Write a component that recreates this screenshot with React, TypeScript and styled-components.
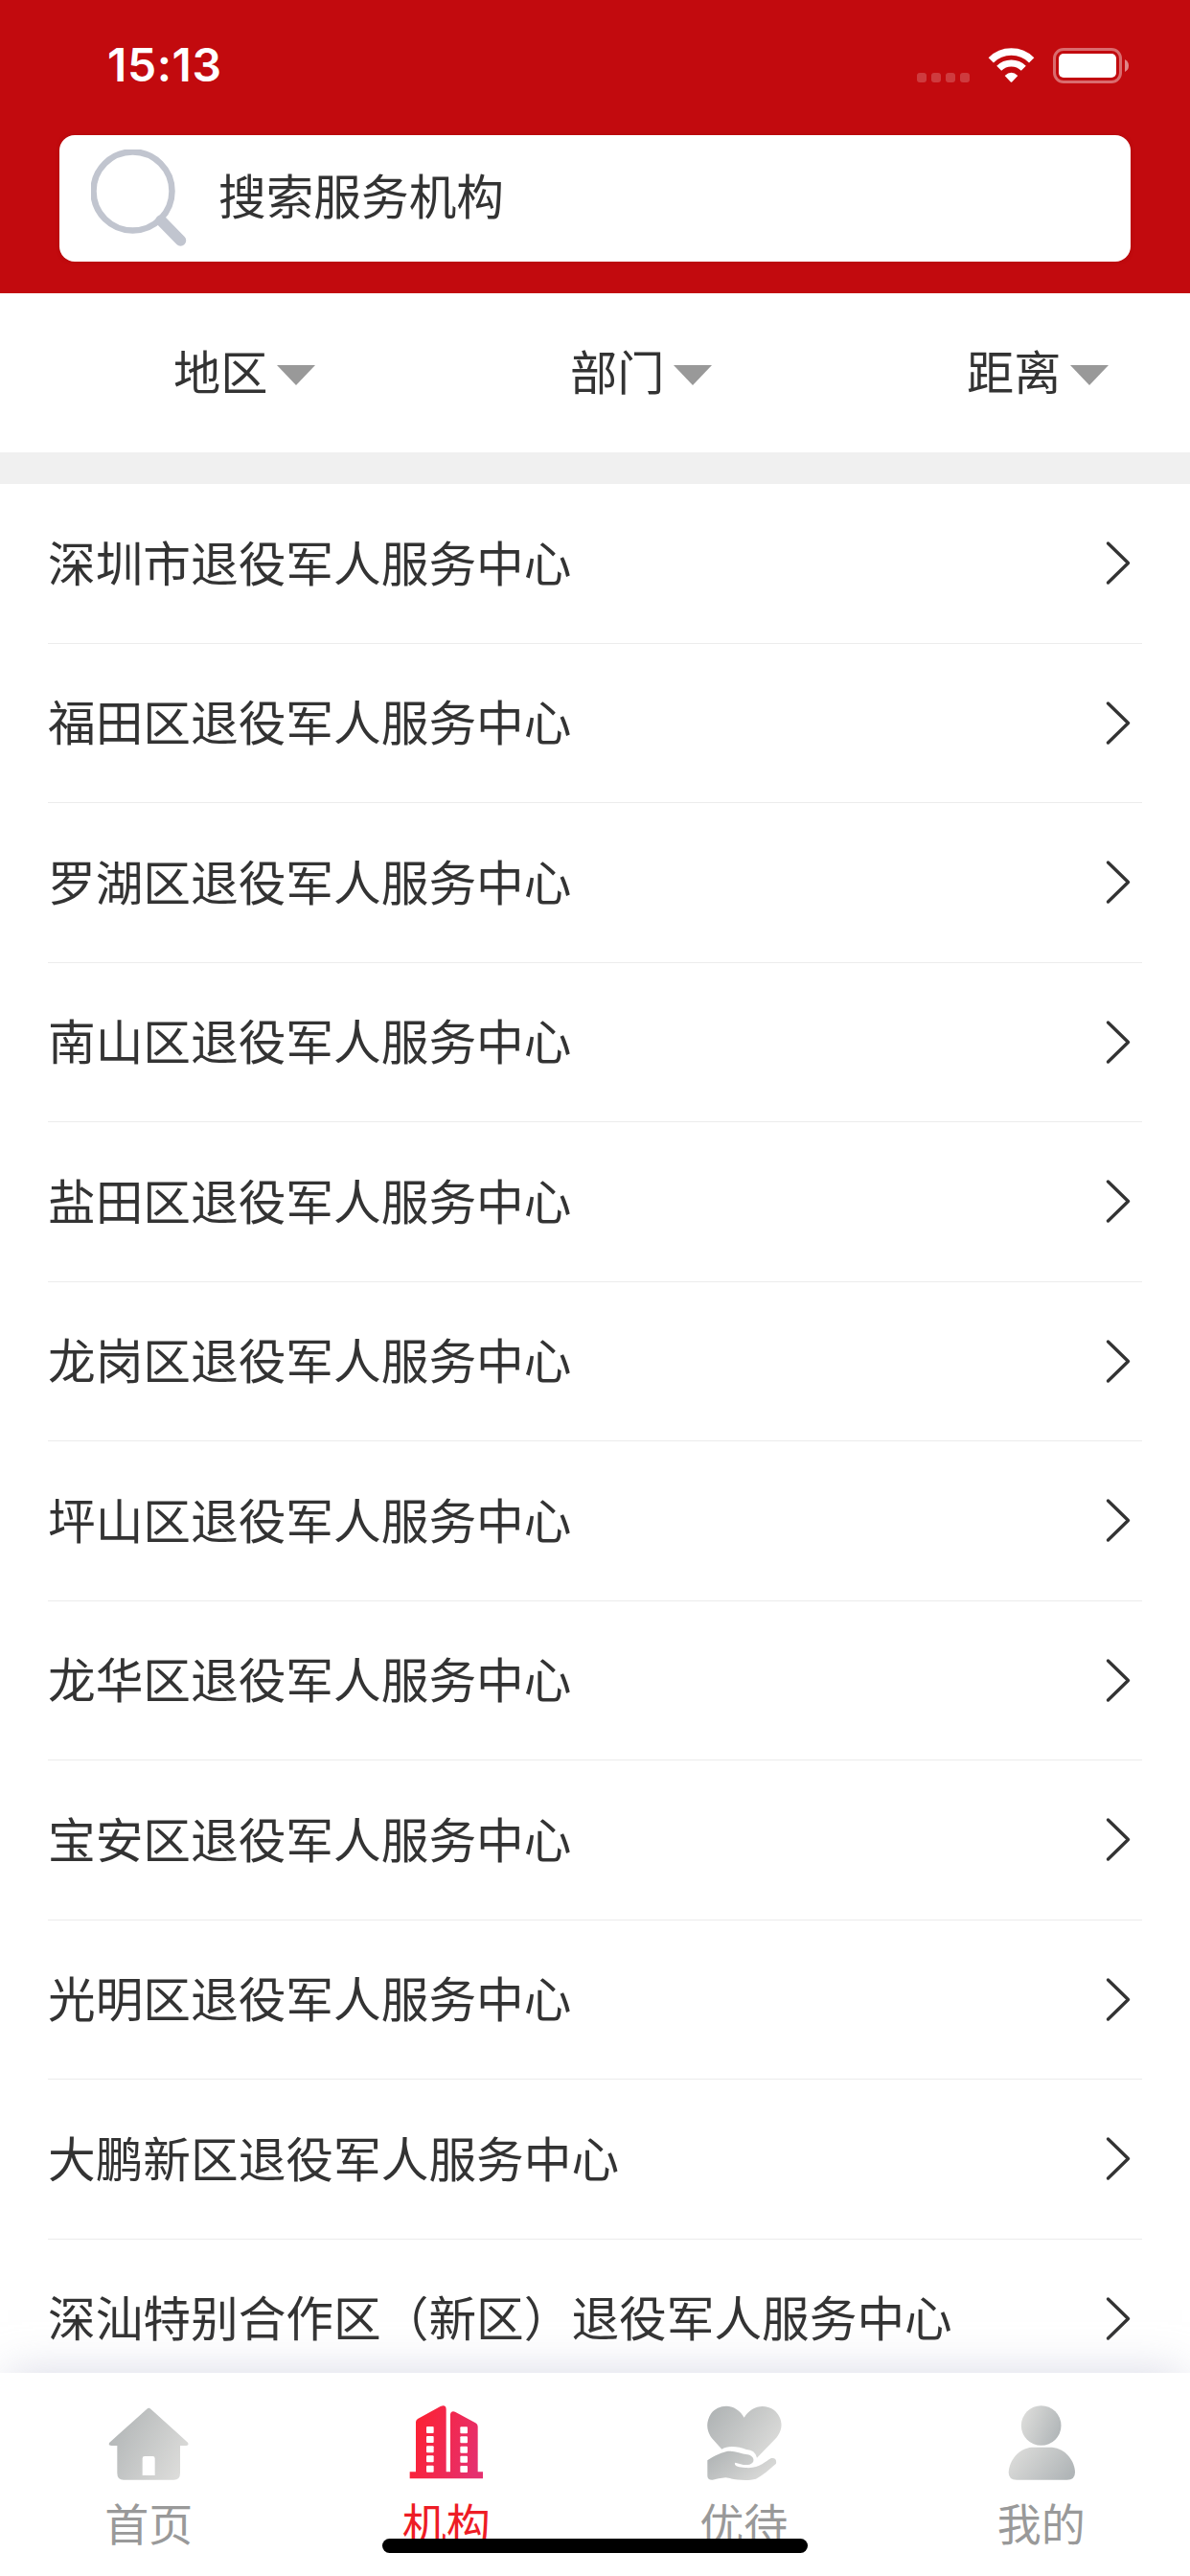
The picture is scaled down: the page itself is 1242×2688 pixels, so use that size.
import React from "react";
import styled, { createGlobalStyle } from "styled-components";

const GlobalStyle = createGlobalStyle`
  * { box-sizing: border-box; }
  body {
    margin: 0;
    background: #fff;
    color: #333;
    font-family: "Noto Sans CJK SC", "Noto Sans", sans-serif;
  }
`;

const Screen = styled.div`
  position: relative;
  display: flex;
  flex-direction: column;
  width: 1242px;
  height: 2688px;
  overflow: hidden;
  background: #fff;
`;

const Header = styled.header`
  flex: none;
  height: 306px;
  background: #c20a0e;
`;

const StatusBar = styled.div`
  display: flex;
  align-items: center;
  justify-content: space-between;
  height: 141px;
  padding: 0 64px 5px 112px;
`;

const Clock = styled.span`
  font-family: Inter, sans-serif;
  font-size: 48px;
  font-weight: 600;
  line-height: 48px;
  letter-spacing: 0.6px;
  color: #fff;
`;

const StatusIcons = styled.svg`
  display: block;
  width: 222px;
  height: 38px;
`;

const SearchBox = styled.div`
  display: flex;
  align-items: center;
  height: 132px;
  margin: 0 62px;
  padding-left: 33px;
  border-radius: 16px;
  background: #fff;
  box-shadow: 0 0 4px rgba(120, 0, 0, 0.25);
`;

const SearchIcon = styled.svg`
  flex: none;
  width: 100px;
  height: 102px;
`;

const Placeholder = styled.span`
  margin-left: 33px;
  padding-bottom: 11px;
  font-size: 49.68px;
  line-height: 60px;
`;

const Filters = styled.nav`
  flex: none;
  display: grid;
  grid-template-columns: repeat(3, 1fr);
  height: 199px;
  border-bottom: 33px solid #f0f0f0;
`;

const Filter = styled.div`
  display: flex;
  align-items: center;
  gap: 10px;
  padding-left: 181px;
`;

const FilterName = styled.span`
  padding-bottom: 6px;
  font-size: 49.2px;
  line-height: 60px;
`;

const Caret = styled.i`
  margin-top: 4px;
  border: 20.5px solid transparent;
  border-top: 21px solid #999;
  border-bottom: 0;
`;

const List = styled.main`
  flex: 1;
  min-height: 0;
  overflow: hidden;
  padding: 0 50px;
`;

const Row = styled.div`
  display: flex;
  align-items: center;
  justify-content: space-between;
  height: 166.5px;
  padding-right: 12px;
  border-bottom: 1px solid #ececec;
`;

const CenterName = styled.span`
  padding-bottom: 6px;
  font-size: 49.68px;
  line-height: 60px;
`;

const Arrow = styled.svg`
  width: 26px;
  height: 53px;
`;

const TabBar = styled.nav`
  position: relative;
  flex: none;
  display: grid;
  grid-template-columns: repeat(4, 1fr);
  height: 212px;
  background: #fff;
  box-shadow: 0 -8px 44px -8px rgba(190, 192, 212, 0.6);
`;

const Tab = styled.div<{ $active?: boolean }>`
  display: flex;
  flex-direction: column;
  align-items: center;
  gap: 13px;
  padding-top: 29px;
  font-size: 46px;
  line-height: 46px;
  color: ${(p) => (p.$active ? "#ee1c25" : "#999")};
`;

const TabIcon = styled.svg`
  width: 90px;
  height: 90px;
`;

const HomeIndicator = styled.div`
  position: absolute;
  left: 399px;
  bottom: 24px;
  width: 444px;
  height: 15px;
  border-radius: 8px;
  background: #000;
`;

const centers = [
  "深圳市退役军人服务中心",
  "福田区退役军人服务中心",
  "罗湖区退役军人服务中心",
  "南山区退役军人服务中心",
  "盐田区退役军人服务中心",
  "龙岗区退役军人服务中心",
  "坪山区退役军人服务中心",
  "龙华区退役军人服务中心",
  "宝安区退役军人服务中心",
  "光明区退役军人服务中心",
  "大鹏新区退役军人服务中心",
  "深汕特别合作区（新区）退役军人服务中心",
];

const windowRows = [126, 156, 187, 217, 248];

export default function App() {
  return (
    <>
      <GlobalStyle />
      <Screen>
        <Header>
          <StatusBar>
            <Clock>15:13</Clock>
            <StatusIcons viewBox="0 0 222 38">
              {[0, 15, 30, 45].map((x) => (
                <rect key={x} x={x + 1} y="27" width="10" height="10" rx="3" fill="#fff" opacity=".2" />
              ))}
              <g fill="none" stroke="#fff">
                <path d="M78.3 13.8 A30 30 0 0 1 120.7 13.8" strokeWidth="7.5" />
                <path d="M86.7 22.3 A18 18 0 0 1 112.3 22.3" strokeWidth="7" />
              </g>
              <path d="M92.7 30 Q99.5 23.5 106.3 30 L100.2 36.5 Q99.5 37.2 98.8 36.5Z" fill="#fff" />
              <rect x="144.5" y="2.5" width="69" height="34" rx="9.5" fill="none" stroke="#fff" strokeWidth="3" opacity=".4" />
              <rect x="149" y="7" width="60" height="25" rx="5" fill="#fff" />
              <path d="M218 13 Q222 15 222 19.5 Q222 24 218 26Z" fill="#fff" opacity=".5" />
            </StatusIcons>
          </StatusBar>
          <SearchBox>
            <SearchIcon viewBox="0 0 100 102">
              <circle cx="43.5" cy="43.5" r="41" fill="none" stroke="#c1c5cf" strokeWidth="6.5" />
              <path d="M73 74 L93.5 95" stroke="#c1c5cf" strokeWidth="11.5" strokeLinecap="round" />
            </SearchIcon>
            <Placeholder>搜索服务机构</Placeholder>
          </SearchBox>
        </Header>
        <Filters>
          {["地区", "部门", "距离"].map((name) => (
            <Filter key={name}>
              <FilterName>{name}</FilterName>
              <Caret />
            </Filter>
          ))}
        </Filters>
        <List>
          {centers.map((name) => (
            <Row key={name}>
              <CenterName>{name}</CenterName>
              <Arrow viewBox="0 0 26 53">
                <path d="M2.5 6 L23.5 26.5 L2.5 47" fill="none" stroke="#333" strokeWidth="3.4" strokeLinecap="round" strokeLinejoin="round" />
              </Arrow>
            </Row>
          ))}
        </List>
        <TabBar>
          <Tab>
            <TabIcon viewBox="61 45 270 270">
              <defs>
                <linearGradient id="greyFall" x1="0" y1="0.2" x2="1" y2="0.7">
                  <stop offset="0" stopColor="#b0b4b5" />
                  <stop offset="1" stopColor="#dcdcda" />
                </linearGradient>
                <linearGradient id="greyRise" x1="0" y1="0.3" x2="1" y2="0.7">
                  <stop offset="0" stopColor="#dcdcda" />
                  <stop offset="1" stopColor="#b0b5b7" />
                </linearGradient>
                <linearGradient id="redPink" gradientUnits="userSpaceOnUse" x1="70" y1="150" x2="275" y2="210">
                  <stop offset="0" stopColor="#fb2236" />
                  <stop offset="1" stopColor="#e5306f" />
                </linearGradient>
              </defs>
              <path
                fill="url(#greyFall)"
                fillRule="evenodd"
                d="M191 71 Q197 65 203 71 L319 176 Q324 186 314 186 H295 V272 Q295 293 275 293 H118 Q98 293 98 272 V186 H80 Q68 186 74 176Z M184 219 Q177 219 177 226 V279 H216 V226 Q216 219 209 219Z"
              />
            </TabIcon>
            首页
          </Tab>
          <Tab $active>
            <TabIcon viewBox="32 45 270 270">
              <path
                fill="url(#redPink)"
                d="M52 268 H71 V112 Q71 106 77 102 L148 63 Q166 56 166 73 V268 H179 V88 Q181 76 194 80 L258 115 Q265 119 265 126 V268 H281 V289 H52Z"
              />
              {windowRows.map((y) => (
                <g key={y} fill="#fff">
                  <rect x="104" y={y} width="23" height="21" rx="3" />
                  <rect x="210" y={y + 1} width="23" height="21" rx="3" />
                </g>
              ))}
            </TabIcon>
            机构
          </Tab>
          <Tab>
            <TabIcon viewBox="34 45 270 270" fill="url(#greyFall)">
              <path d="M171 98 C145 51 91 54 67 86 C50 113 53 140 70 163 L101 197 C119 184 154 188 178 198 Q205 199 211 224 L272 161 C298 130 289 94 264 74 C232 52 192 63 171 98Z" />
              <path d="M56 232 C78 216 105 206 120 203 C141 202 161 210 181 214 C204 217 207 240 188 245 C172 249 158 243 143 239 C137 249 152 254 174 255 C219 259 236 235 256 225 Q274 223 271 242 C250 260 229 279 208 290 C174 299 136 290 113 286 Q90 289 72 293 Q57 294 56 281Z" />
            </TabIcon>
            优待
          </Tab>
          <Tab>
            <TabIcon viewBox="35 45 270 270" fill="url(#greyRise)">
              <circle cx="169" cy="123" r="62.5" />
              <path d="M140 191 H203 C246 195 275 235 275 270 Q275 293 250 293 H92 Q67 293 67 270 C69 231 98 195 140 191Z" />
            </TabIcon>
            我的
          </Tab>
        </TabBar>
        <HomeIndicator />
      </Screen>
    </>
  );
}
